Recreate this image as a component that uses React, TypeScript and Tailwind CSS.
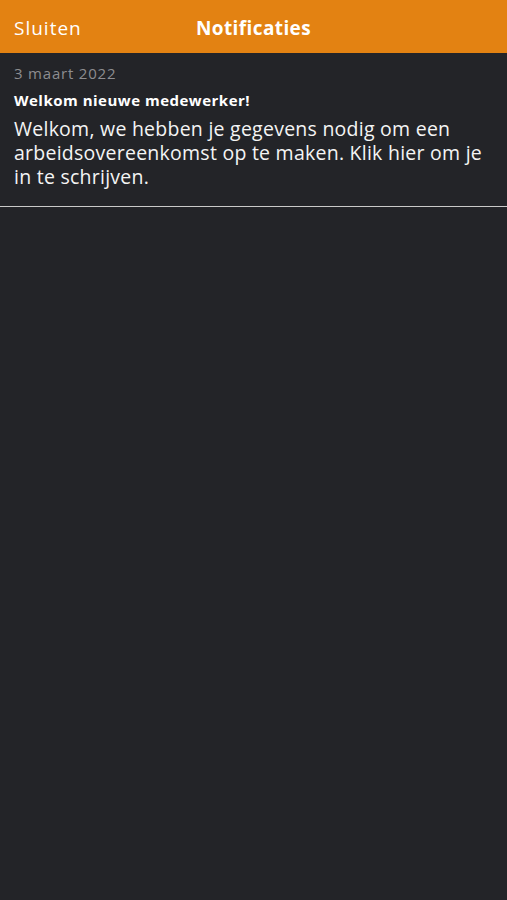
export default function App() {
  return (
    <div className="min-h-[900px] bg-[#232428] font-['Open_Sans',sans-serif] text-white">
      <header className="grid h-[53px] grid-cols-[1fr_auto_1fr] items-center bg-[#e38212] px-[14px] pt-[3px]">
        <button type="button" className="justify-self-start text-[19px] tracking-[1px] text-white">
          Sluiten
        </button>
        <h1 className="text-[19px] font-bold tracking-[0.4px]">Notificaties</h1>
        <div />
      </header>

      <article className="border-b-[1.5px] border-[#c9c9c9] px-[14px] pt-[9px] pb-[17px]">
        <p className="text-[15px] leading-[22px] tracking-[0.8px] text-[#8d8d90]">3 maart 2022</p>
        <h2 className="mt-[5px] text-[15px] leading-[22px] font-bold tracking-[0.5px]">Welkom nieuwe medewerker!</h2>
        <p className="mt-[6px] text-[19.5px] leading-[24px] tracking-[0.25px] text-[#f4f4f4]">
          Welkom, we hebben je gegevens nodig om een arbeidsovereenkomst op te maken. Klik hier om je in te
          schrijven.
        </p>
      </article>
    </div>
  );
}
